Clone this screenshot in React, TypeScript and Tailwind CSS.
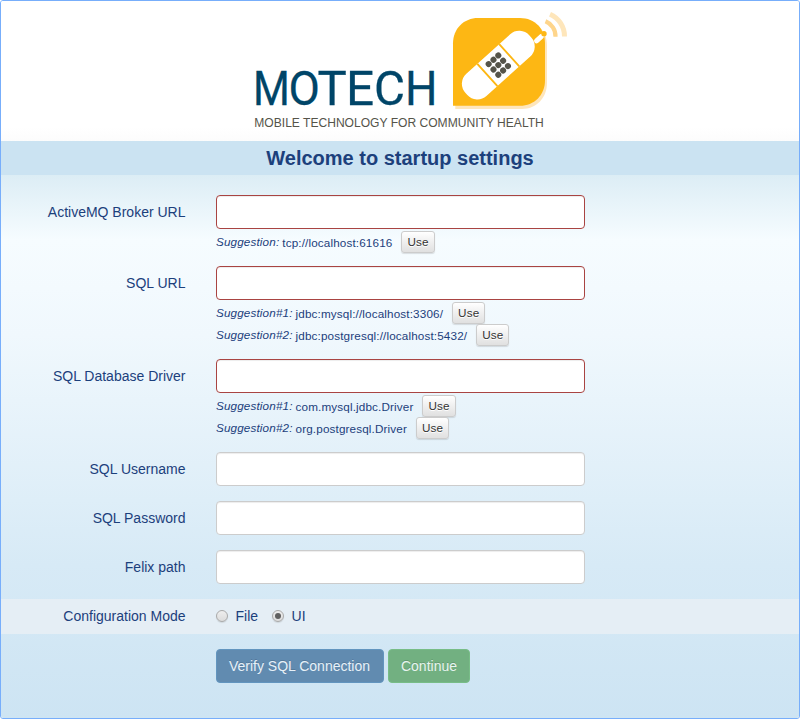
import { useState, type ReactNode } from "react";

const wordmark = [
  { ch: "M", x: 253.1, scale: 0.87 },
  { ch: "O", x: 288.5, scale: 0.94 },
  { ch: "T", x: 317.6, scale: 1.01 },
  { ch: "E", x: 346.1, scale: 1.02 },
  { ch: "C", x: 374, scale: 0.98 },
  { ch: "H", x: 405, scale: 0.94 },
];

const keys = [-1, 0, 1].flatMap((row) => [-1, 0, 1].map((col) => ({ x: col * 6.5, y: row * 7.2 })));

function Logo() {
  return (
    <svg width="330" height="140" viewBox="250 1 330 140" className="ml-[249px] block" role="img" aria-label="MOTECH">
      <path d="M455.300 109V45c0-15 12-24 25-24h42c15 0 24.700 10 24.700 25v37c0 15-11 26-25 26z" fill="#fee6bb" />
      <path d="M453 105.700V43.500c0-15 11-25.500 25-25.500h42c15 0 25 11 25 25.500v36.700c0 15-11 25.500-25 25.500z" fill="#fdb714" />
      <g transform="translate(498.300 65.100) rotate(-42)">
        <rect x="-43" y="-15" width="86" height="30" rx="13.500" fill="#fff" />
        <path d="M-14.700 -15V15M14.700 -15V15" stroke="#fdb714" strokeWidth="1.900" />
        {keys.map((k) => <circle key={`${k.x},${k.y}`} cx={k.x} cy={k.y} r="3" fill="#55544a" />)}
      </g>
      <path d="M536.500 40.800L541.500 36.300" stroke="#fff" strokeWidth="5" strokeLinecap="round" />
      <circle cx="544" cy="33.800" r="2.700" fill="#fdb714" />
      <path d="M545.500 21.300A16 16 0 0 1 555.500 36.700" fill="none" stroke="#fed58b" strokeWidth="4.200" />
      <path d="M550 14.300A24 24 0 0 1 564.500 36.500" fill="none" stroke="#fee6bb" strokeWidth="5" />
      <g fontFamily="Roboto, sans-serif" fontSize="48.500" fill="#004568" stroke="#004568" strokeWidth=".3">
        {wordmark.map((l) => <text key={l.ch} transform={`translate(${l.x} 105.400) scale(${l.scale} 1)`}>{l.ch}</text>)}
      </g>
      <text x="254.300" y="127.400" textLength="289.500" lengthAdjust="spacingAndGlyphs" fontFamily="Liberation Sans, sans-serif" fontSize="12" fill="#55544a">MOBILE TECHNOLOGY FOR COMMUNITY HEALTH</text>
    </svg>
  );
}

function Field({ label, invalid = false, children }: { label: string; invalid?: boolean; children?: ReactNode }) {
  return (
    <div className="mb-[15px] flex">
      <label className="w-[184.5px] shrink-0 pt-[7px] text-right text-sm leading-5">{label}</label>
      <div className="ml-[30.5px] w-[369px]">
        <input
          aria-label={label}
          className={`block h-[34px] w-full rounded border bg-white px-3 text-sm shadow-[inset_0_1px_1px_rgba(0,0,0,0.075)] outline-none ${invalid ? "border-[#a94442]" : "border-[#cccccc]"}`}
        />
        {children}
      </div>
    </div>
  );
}

function Suggestion({ name, value }: { name: string; value: string }) {
  return (
    <div className="flex h-[22px] items-start whitespace-nowrap text-[11.7px] leading-[17px] tracking-[0.14px]">
      <i className="mt-[4px]">{name}</i>
      <span className="mt-[5px] ml-[3px]">{value}</span>
      <button className="ml-[9px] mt-[2px] h-[22px] rounded-[3px] border border-[#cccccc] bg-linear-to-b from-white to-[#e0e0e0] px-[5px] text-[11.7px] leading-5 text-[#333333] shadow-[0_1px_1px_rgba(0,0,0,0.12)] [text-shadow:0_1px_0_#fff]">Use</button>
    </div>
  );
}

function Radio({ checked, onSelect, label }: { checked: boolean; onSelect: () => void; label: string }) {
  return (
    <label className="flex items-center text-sm leading-5">
      <input type="radio" name="mode" checked={checked} onChange={onSelect} className="sr-only" />
      <span className="mr-[7.5px] flex size-3 items-center justify-center rounded-full border border-[#a9a9a9] bg-linear-to-b from-[#eeeeee] to-[#dcdcdc] shadow-[0_1px_1px_rgba(0,0,0,0.1)]">
        {checked && <span className="size-1.5 rounded-full bg-[#606060]" />}
      </span>
      {label}
    </label>
  );
}

export default function App() {
  const [mode, setMode] = useState("UI");
  return (
    <main className="h-[719px] w-[800px] overflow-hidden rounded-[3px] border border-[#77aefb] bg-white font-['Liberation_Sans',Arial,sans-serif] text-[#1c407c]">
      <header className="h-[140px] bg-linear-to-b from-white from-90% to-[#fcfcfc]"><Logo /></header>
      <h1 className="h-[34px] bg-[#cbe3f2] text-center text-[20px] leading-[34px] font-bold">Welcome to startup settings</h1>
      <form onSubmit={(e) => e.preventDefault()} className="h-[543px] bg-[linear-gradient(to_bottom,#dcedf5_0,#f6fcff_65px,#f0f8fd_160px,#d7eaf6_390px,#cde4f3_543px)] pt-5">
        <Field label="ActiveMQ Broker URL" invalid>
          <Suggestion name="Suggestion:" value="tcp://localhost:61616" />
        </Field>
        <Field label="SQL URL" invalid>
          <Suggestion name="Suggestion#1:" value="jdbc:mysql://localhost:3306/" />
          <Suggestion name="Suggestion#2:" value="jdbc:postgresql://localhost:5432/" />
        </Field>
        <Field label="SQL Database Driver" invalid>
          <Suggestion name="Suggestion#1:" value="com.mysql.jdbc.Driver" />
          <Suggestion name="Suggestion#2:" value="org.postgresql.Driver" />
        </Field>
        <Field label="SQL Username" />
        <Field label="SQL Password" />
        <Field label="Felix path" />
        <div className="flex h-[35px] items-center bg-[#e5eef5] pb-0.5">
          <span className="w-[184.5px] text-right text-sm">Configuration Mode</span>
          <div className="ml-[30.5px] flex gap-[14px]">
            <Radio label="File" checked={mode === "File"} onSelect={() => setMode("File")} />
            <Radio label="UI" checked={mode === "UI"} onSelect={() => setMode("UI")} />
          </div>
        </div>
        <div className="mt-[15px] ml-[215px] flex gap-1">
          <button className="h-[34px] w-[168px] rounded border border-[#6295bf] bg-[#618bb0] pr-px text-sm text-[#e7f1f8] [text-shadow:0_-1px_0_rgba(0,0,0,0.15)]">Verify SQL Connection</button>
          <button className="h-[34px] w-[82px] rounded border border-[#78bd87] bg-[#72b081] text-sm text-[#e7f4ef] [text-shadow:0_-1px_0_rgba(0,0,0,0.15)]">Continue</button>
        </div>
      </form>
    </main>
  );
}
